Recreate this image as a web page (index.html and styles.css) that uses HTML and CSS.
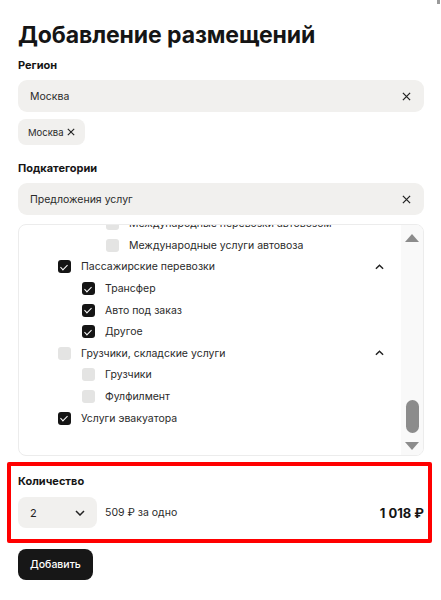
FILE: index.html
```html
<!DOCTYPE html>
<html lang="ru">
<head>
<meta charset="utf-8">
<title>Добавление размещений</title>
<link rel="stylesheet" href="styles.css">
</head>
<body>
<div class="corner-mark"></div>
<main class="wrap">
  <h1 class="title">Добавление размещений</h1>

  <div class="label">Регион</div>
  <div class="input">
    <span>Москва</span>
    <svg class="x" viewBox="0 0 10 10"><path d="M1 1L9 9M9 1L1 9"/></svg>
  </div>
  <div class="chips">
    <span class="chip">Москва <svg class="x small" viewBox="0 0 10 10"><path d="M1 1L9 9M9 1L1 9"/></svg></span>
  </div>

  <div class="label sub">Подкатегории</div>
  <div class="input">
    <span>Предложения услуг</span>
    <svg class="x" viewBox="0 0 10 10"><path d="M1 1L9 9M9 1L1 9"/></svg>
  </div>

  <div class="tree">
    <div class="tree-list">
      <div class="row l3"><span class="cb"></span><span>Международные перевозки автовозом</span></div>
      <div class="row l3"><span class="cb"></span><span>Международные услуги автовоза</span></div>
      <div class="row l1"><span class="cb on"></span><span class="grow">Пассажирские перевозки</span><svg class="chev" viewBox="0 0 10 6"><path d="M1 5L5 1L9 5"/></svg></div>
      <div class="row l2"><span class="cb on"></span><span>Трансфер</span></div>
      <div class="row l2"><span class="cb on"></span><span>Авто под заказ</span></div>
      <div class="row l2"><span class="cb on"></span><span>Другое</span></div>
      <div class="row l1"><span class="cb"></span><span class="grow">Грузчики, складские услуги</span><svg class="chev" viewBox="0 0 10 6"><path d="M1 5L5 1L9 5"/></svg></div>
      <div class="row l2"><span class="cb"></span><span>Грузчики</span></div>
      <div class="row l2"><span class="cb"></span><span>Фулфилмент</span></div>
      <div class="row l1"><span class="cb on"></span><span>Услуги эвакуатора</span></div>
    </div>
    <div class="scrollbar">
      <span class="arrow up"></span>
      <span class="thumb"></span>
      <span class="arrow down"></span>
    </div>
  </div>

  <section class="qty">
    <div class="label">Количество</div>
    <div class="qty-row">
      <div class="select">
        <span>2</span>
        <svg class="chev-down" viewBox="0 0 10 6"><path d="M1 1L5 5L9 1"/></svg>
      </div>
      <span class="per">509 ₽ за одно</span>
      <span class="total">1 018 ₽</span>
    </div>
  </section>

  <button class="btn">Добавить</button>
</main>
</body>
</html>
```

FILE: styles.css
```css
* { box-sizing: border-box; }
html, body { margin: 0; padding: 0; background: #fff; }
body {
  font-family: Inter, "Noto Sans", "DejaVu Sans", sans-serif;
  color: #222;
  width: 441px;
  height: 600px;
  overflow: hidden;
  position: relative;
}
.corner-mark {
  position: absolute;
  right: 1px;
  top: 0;
  width: 3px;
  height: 4px;
  background: #9a9a9a;
}
.wrap {
  padding: 20px 17px 0 18px;
  display: flex;
  flex-direction: column;
}
.title {
  margin: 0;
  font-size: 23px;
  line-height: 31px;
  font-weight: 700;
  color: #151515;
  letter-spacing: -0.1px;
}
.label {
  font-size: 11px;
  line-height: 14px;
  font-weight: 700;
  color: #151515;
  margin-top: 7px;
}
.label.sub { margin-top: 16px; }
.input {
  margin-top: 8px;
  height: 32px;
  background: #f1f0ee;
  border-radius: 9px;
  display: flex;
  align-items: center;
  justify-content: space-between;
  padding: 0 13px 0 12px;
  font-size: 10.5px;
  color: #2a2a2a;
}
.x {
  width: 9px;
  height: 9px;
  stroke: #222;
  stroke-width: 1.4;
  fill: none;
}
.x.small { width: 8px; height: 8px; margin-left: 3px; }
.chips { margin-top: 7px; display: flex; }
.chip {
  height: 26px;
  background: #f1f0ee;
  border-radius: 8px;
  padding: 0 10px 0 10px;
  display: inline-flex;
  align-items: center;
  font-size: 9.5px;
  color: #2a2a2a;
}
.tree {
  margin-top: 9px;
  height: 232px;
  border: 1px solid #ececec;
  border-radius: 8px;
  display: flex;
  overflow: hidden;
}
.tree-list {
  flex: 1;
  padding-left: 39px;
  padding-right: 17px;
  margin-top: -12px;
}
.row {
  height: 21.6px;
  display: flex;
  align-items: center;
  font-size: 10.5px;
  color: #2a2a2a;
  white-space: nowrap;
}
.row.l2 { padding-left: 24px; }
.row.l3 { padding-left: 48px; }
.grow { flex: 1; }
.cb {
  width: 13px;
  height: 13px;
  border-radius: 3px;
  background: #e4e4e3;
  margin-right: 10px;
  flex: none;
  position: relative;
}
.cb.on { background: #151515; }
.cb.on::after {
  content: "";
  position: absolute;
  left: 4px;
  top: 2.5px;
  width: 3px;
  height: 6px;
  border: solid #fff;
  border-width: 0 1.6px 1.6px 0;
  transform: rotate(45deg);
}
.chev {
  width: 9px;
  height: 6px;
  stroke: #222;
  stroke-width: 1.6;
  fill: none;
}
.scrollbar {
  width: 22px;
  background: #f9f9f9;
  display: flex;
  flex-direction: column;
  align-items: center;
  padding: 9px 0 5px;
}
.arrow {
  width: 0;
  height: 0;
  border-left: 7px solid transparent;
  border-right: 7px solid transparent;
}
.arrow.up { border-bottom: 8px solid #8c8c8c; }
.arrow.down { border-top: 8px solid #8c8c8c; }
.thumb {
  margin-top: auto;
  margin-bottom: 9px;
  width: 13px;
  height: 33px;
  border-radius: 7px;
  background: #8c8c8c;
}
.qty {
  margin: 6px -8px 0 -11px;
  border: 4px solid #ff0000;
  border-radius: 2px;
  padding: 8px 4px 11px 7px;
}
.qty .label { margin-top: 0; }
.qty-row {
  margin-top: 9px;
  display: flex;
  align-items: center;
}
.select {
  width: 79px;
  height: 31px;
  background: #f1f0ee;
  border-radius: 8px;
  display: flex;
  align-items: center;
  justify-content: space-between;
  padding: 0 12px 0 12px;
  font-size: 11px;
  color: #222;
}
.chev-down {
  width: 10px;
  height: 6px;
  stroke: #222;
  stroke-width: 1.5;
  fill: none;
}
.per {
  margin-left: 8px;
  font-size: 10.5px;
  color: #2a2a2a;
  flex: 1;
}
.total {
  font-size: 13px;
  font-weight: 700;
  color: #151515;
}
.btn {
  margin-top: 6px;
  align-self: flex-start;
  height: 31px;
  padding: 0 12px;
  background: #171717;
  color: #fff;
  border: none;
  border-radius: 8px;
  font-family: inherit;
  font-size: 10.5px;
  font-weight: 500;
}
```
